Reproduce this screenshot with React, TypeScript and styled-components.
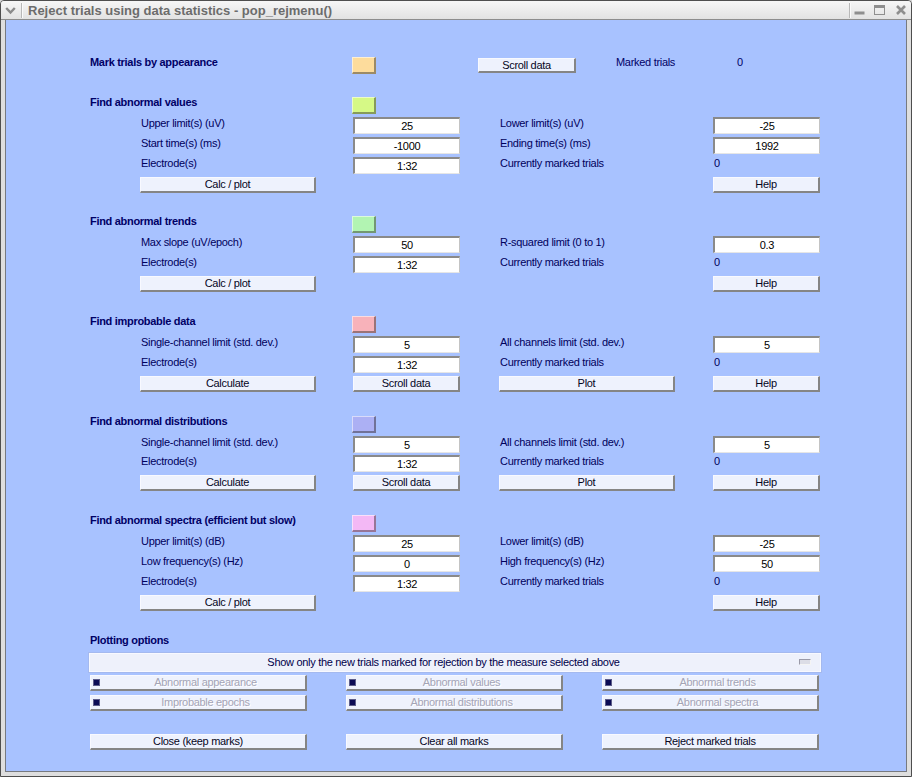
import React from "react";
import styled, { createGlobalStyle } from "styled-components";

const ROW = 19.93;

const Global = createGlobalStyle`
  html, body { margin: 0; padding: 0; background: #d8d8d8; }
  body { font-family: "Liberation Sans", Arial, sans-serif; }
  * { box-sizing: border-box; }
`;

const Window = styled.div`
  width: 912px;
  height: 777px;
  display: flex;
  flex-direction: column;
  border: 1px solid #4e4e4e;
  border-radius: 4px 4px 0 0;
  background: #dedede;
  overflow: hidden;
`;

const TitleBar = styled.div`
  height: 19px;
  flex: none;
  display: flex;
  align-items: center;
  padding-left: 4px;
  padding-right: 5px;
  background: linear-gradient(to bottom, #f6f6f6, #e2e2e2);
  border-bottom: 1px solid #8d8d8d;
`;

const TitleSep = styled.div<{ $ml: number }>`
  width: 1px;
  height: 15px;
  margin-left: ${(p) => p.$ml}px;
  background: #b8b8b8;
  box-shadow: 1px 0 0 #fafafa;
`;

const TitleText = styled.div`
  margin-left: 6px;
  font: bold 13px/17px "Liberation Sans", Arial, sans-serif;
  color: #6c6c6c;
  white-space: nowrap;
`;

const Spacer = styled.div`
  flex: 1;
`;

const TitleIcon = styled.svg<{ $ml: number }>`
  display: block;
  flex: none;
  margin-left: ${(p) => p.$ml}px;
`;

const Frame = styled.div`
  flex: 1;
  display: flex;
  padding: 0 4px 4px 4px;
`;

const Content = styled.div`
  flex: 1;
  background: #a8c2ff;
  border: 1px solid #777a80;
  border-top: none;
  padding: 37px 0 0 84px;
  display: flex;
  flex-direction: column;
  font-size: 11px;
  letter-spacing: -0.3px;
  color: #000066;
`;

const TopRow = styled.div`
  display: flex;
  align-items: flex-start;
  height: ${ROW}px;
  margin-bottom: ${ROW}px;
`;

const Heading = styled.div<{ $w?: number }>`
  font-weight: bold;
  line-height: 11px;
  color: #000066;
  white-space: nowrap;
  width: ${(p) => (p.$w ? `${p.$w}px` : "auto")};
  grid-column: 1 / 3;
`;

const TopText = styled.div<{ $w?: number; $ml?: number }>`
  line-height: 11px;
  white-space: nowrap;
  width: ${(p) => (p.$w ? `${p.$w}px` : "auto")};
  margin-left: ${(p) => p.$ml ?? 0}px;
`;

const Swatch = styled.div<{ $color: string }>`
  width: 24px;
  height: 17px;
  margin-left: -1px;
  background: ${(p) => p.$color};
  border-top: 1px solid rgba(255, 255, 255, 0.55);
  border-left: 1px solid rgba(255, 255, 255, 0.55);
  border-right: 2px solid rgba(40, 40, 40, 0.45);
  border-bottom: 2px solid rgba(40, 40, 40, 0.45);
  grid-column: 3;
`;

const Section = styled.div`
  display: grid;
  grid-template-columns: 50px 213px 107px 39px 214px 107px;
  grid-auto-rows: ${ROW}px;
  margin-bottom: ${ROW}px;
  align-items: start;
`;

const Label = styled.div<{ $col: number }>`
  grid-column: ${(p) => p.$col};
  padding-left: 1px;
  line-height: 13px;
  white-space: nowrap;
  color: #00005c;
`;

const Field = styled.input<{ $col: number }>`
  grid-column: ${(p) => p.$col};
  width: 107px;
  height: 17px;
  margin: 0;
  padding: 0;
  background: #ffffff;
  border-top: 2px solid #8a8a8a;
  border-left: 2px solid #8a8a8a;
  border-right: 1px solid #c4c4c4;
  border-bottom: 1px solid #e6e6e6;
  font: 11px/14px "Liberation Sans", Arial, sans-serif;
  letter-spacing: -0.3px;
  color: #000000;
  text-align: center;
  outline: none;
`;

const Button = styled.button<{ $col?: number; $w: number; $h?: number }>`
  grid-column: ${(p) => p.$col ?? "auto"};
  width: ${(p) => p.$w}px;
  height: ${(p) => p.$h ?? 16}px;
  margin: 0;
  padding: 0;
  background: #eef2fd;
  border-top: 1px solid #f8f9ff;
  border-left: 1px solid #f8f9ff;
  border-right: 2px solid #858585;
  border-bottom: 2px solid #858585;
  font: 11px/13px "Liberation Sans", Arial, sans-serif;
  letter-spacing: -0.3px;
  color: #06061e;
  text-align: center;
  white-space: nowrap;
  cursor: default;
`;

const ScrollBtn = styled(Button)`
  margin-left: 102px;
  margin-top: 1px;
`;

const PlotSection = styled.div`
  display: flex;
  flex-direction: column;
`;

const PlotHead = styled.div`
  height: ${ROW}px;
`;

const Popup = styled.div`
  height: ${ROW}px;
`;

const PopupBox = styled.div`
  width: 732px;
  height: 19px;
  margin: -2px 0 0 -1px;
  display: flex;
  align-items: center;
  background: #eef1fb;
  border: 1px solid #f8f9ff;
  box-shadow: 0 0 0 1px rgba(150, 160, 190, 0.25);
  color: #00004a;
  line-height: 13px;
`;

const PopupText = styled.div`
  flex: 1;
  text-align: center;
  white-space: nowrap;
`;

const PopupIcon = styled.div`
  width: 12px;
  height: 6px;
  margin: 0 9px 0 2px;
  background: #dcdde6;
  border: 1px solid #9a9aa8;
  border-right-color: #f4f4f4;
  border-bottom-color: #f4f4f4;
`;

const TriGrid = styled.div`
  display: grid;
  grid-template-columns: repeat(3, 217px);
  column-gap: 39px;
  grid-auto-rows: ${ROW}px;
  align-items: start;
`;

const CheckBox = styled.div`
  width: 217px;
  height: 16px;
  display: flex;
  align-items: center;
  background: #eef2fd;
  border-top: 1px solid #f8f9ff;
  border-left: 1px solid #f8f9ff;
  border-right: 2px solid #858585;
  border-bottom: 2px solid #858585;
`;

const Tick = styled.div`
  width: 7px;
  height: 7px;
  margin-left: 2px;
  flex: none;
  background: #0b0b55;
  border: 1px solid #5d5d8a;
`;

const CheckLabel = styled.div`
  flex: 1;
  text-align: center;
  padding-left: 6px;
  line-height: 13px;
  color: #a4a4b6;
  text-shadow: 1px 1px 0 #ffffff;
  white-space: nowrap;
`;

const Blank = styled.div`
  height: ${ROW}px;
`;

type FieldRow = { l: string; v: string; r: string; rv: string; rText?: boolean };
type Sec = { title: string; color: string; rows: FieldRow[]; buttons: (string | null)[] };

const marked: FieldRow = { l: "Electrode(s)", v: "1:32", r: "Currently marked trials", rv: "0", rText: true };

const sections: Sec[] = [
  {
    title: "Find abnormal values",
    color: "#d6f986",
    rows: [
      { l: "Upper limit(s) (uV)", v: "25", r: "Lower limit(s) (uV)", rv: "-25" },
      { l: "Start time(s) (ms)", v: "-1000", r: "Ending time(s) (ms)", rv: "1992" },
      marked,
    ],
    buttons: ["Calc / plot", null, null, "Help"],
  },
  {
    title: "Find abnormal trends",
    color: "#b2f4b2",
    rows: [{ l: "Max slope (uV/epoch)", v: "50", r: "R-squared limit (0 to 1)", rv: "0.3" }, marked],
    buttons: ["Calc / plot", null, null, "Help"],
  },
  {
    title: "Find improbable data",
    color: "#f8b2ba",
    rows: [
      { l: "Single-channel limit (std. dev.)", v: "5", r: "All channels limit (std. dev.)", rv: "5" },
      marked,
    ],
    buttons: ["Calculate", "Scroll data", "Plot", "Help"],
  },
  {
    title: "Find abnormal distributions",
    color: "#acb0f4",
    rows: [
      { l: "Single-channel limit (std. dev.)", v: "5", r: "All channels limit (std. dev.)", rv: "5" },
      marked,
    ],
    buttons: ["Calculate", "Scroll data", "Plot", "Help"],
  },
  {
    title: "Find abnormal spectra (efficient but slow)",
    color: "#f3b8f5",
    rows: [
      { l: "Upper limit(s) (dB)", v: "25", r: "Lower limit(s) (dB)", rv: "-25" },
      { l: "Low frequency(s) (Hz)", v: "0", r: "High frequency(s) (Hz)", rv: "50" },
      marked,
    ],
    buttons: ["Calc / plot", null, null, "Help"],
  },
];

const btnCols = [2, 3, 5, 6];
const btnWidths = [176, 107, 176, 107];

const checks = [
  "Abnormal appearance",
  "Abnormal values",
  "Abnormal trends",
  "Improbable epochs",
  "Abnormal distributions",
  "Abnormal spectra",
];

export default function App() {
  return (
    <>
      <Global />
      <Window>
        <TitleBar>
          <TitleIcon $ml={0} width="11" height="19" viewBox="0 0 11 19">
            <path d="M1.2 7 L5.5 11.5 L9.8 7" fill="none" stroke="#8a8a8a" strokeWidth="2.4" />
          </TitleIcon>
          <TitleSep $ml={5} />
          <TitleText>Reject trials using data statistics - pop_rejmenu()</TitleText>
          <Spacer />
          <TitleSep $ml={0} />
          <TitleIcon $ml={4} width="11" height="19" viewBox="0 0 11 19">
            <rect x="0.5" y="10.5" width="10" height="3" fill="#8e8e8e" />
          </TitleIcon>
          <TitleIcon $ml={9} width="11" height="19" viewBox="0 0 11 19">
            <rect x="0.5" y="4.5" width="10" height="9" fill="none" stroke="#8e8e8e" strokeWidth="1" />
            <rect x="0.5" y="4.5" width="10" height="2.5" fill="#8e8e8e" />
          </TitleIcon>
          <TitleIcon $ml={11} width="10" height="19" viewBox="0 0 10 19">
            <path d="M1 5 L9 13 M9 5 L1 13" stroke="#8e8e8e" strokeWidth="2.6" />
          </TitleIcon>
        </TitleBar>
        <Frame>
          <Content>
            <TopRow>
              <Heading $w={263}>Mark trials by appearance</Heading>
              <Swatch $color="#fddc9c" />
              <ScrollBtn $w={98} $h={15}>Scroll data</ScrollBtn>
              <TopText $w={121} $ml={40}>Marked trials</TopText>
              <TopText>0</TopText>
            </TopRow>

            {sections.map((s) => (
              <Section key={s.title}>
                <Heading>{s.title}</Heading>
                <Swatch $color={s.color} />
                {s.rows.map((r, i) => (
                  <React.Fragment key={i}>
                    <Label $col={2}>{r.l}</Label>
                    <Field $col={3} readOnly value={r.v} />
                    <Label $col={5}>{r.r}</Label>
                    {r.rText ? <Label $col={6}>{r.rv}</Label> : <Field $col={6} readOnly value={r.rv} />}
                  </React.Fragment>
                ))}
                {s.buttons.map((b, i) =>
                  b ? (
                    <Button key={i} $col={btnCols[i]} $w={btnWidths[i]}>
                      {b}
                    </Button>
                  ) : null
                )}
              </Section>
            ))}

            <PlotSection>
              <PlotHead>
                <Heading>Plotting options</Heading>
              </PlotHead>
              <Popup>
                <PopupBox>
                  <PopupText>Show only the new trials marked for rejection by the measure selected above</PopupText>
                  <PopupIcon />
                </PopupBox>
              </Popup>
              <TriGrid>
                {checks.map((c) => (
                  <CheckBox key={c}>
                    <Tick />
                    <CheckLabel>{c}</CheckLabel>
                  </CheckBox>
                ))}
              </TriGrid>
              <Blank />
              <TriGrid>
                <Button $w={217}>Close (keep marks)</Button>
                <Button $w={217}>Clear all marks</Button>
                <Button $w={217}>Reject marked trials</Button>
              </TriGrid>
            </PlotSection>
          </Content>
        </Frame>
      </Window>
    </>
  );
}
